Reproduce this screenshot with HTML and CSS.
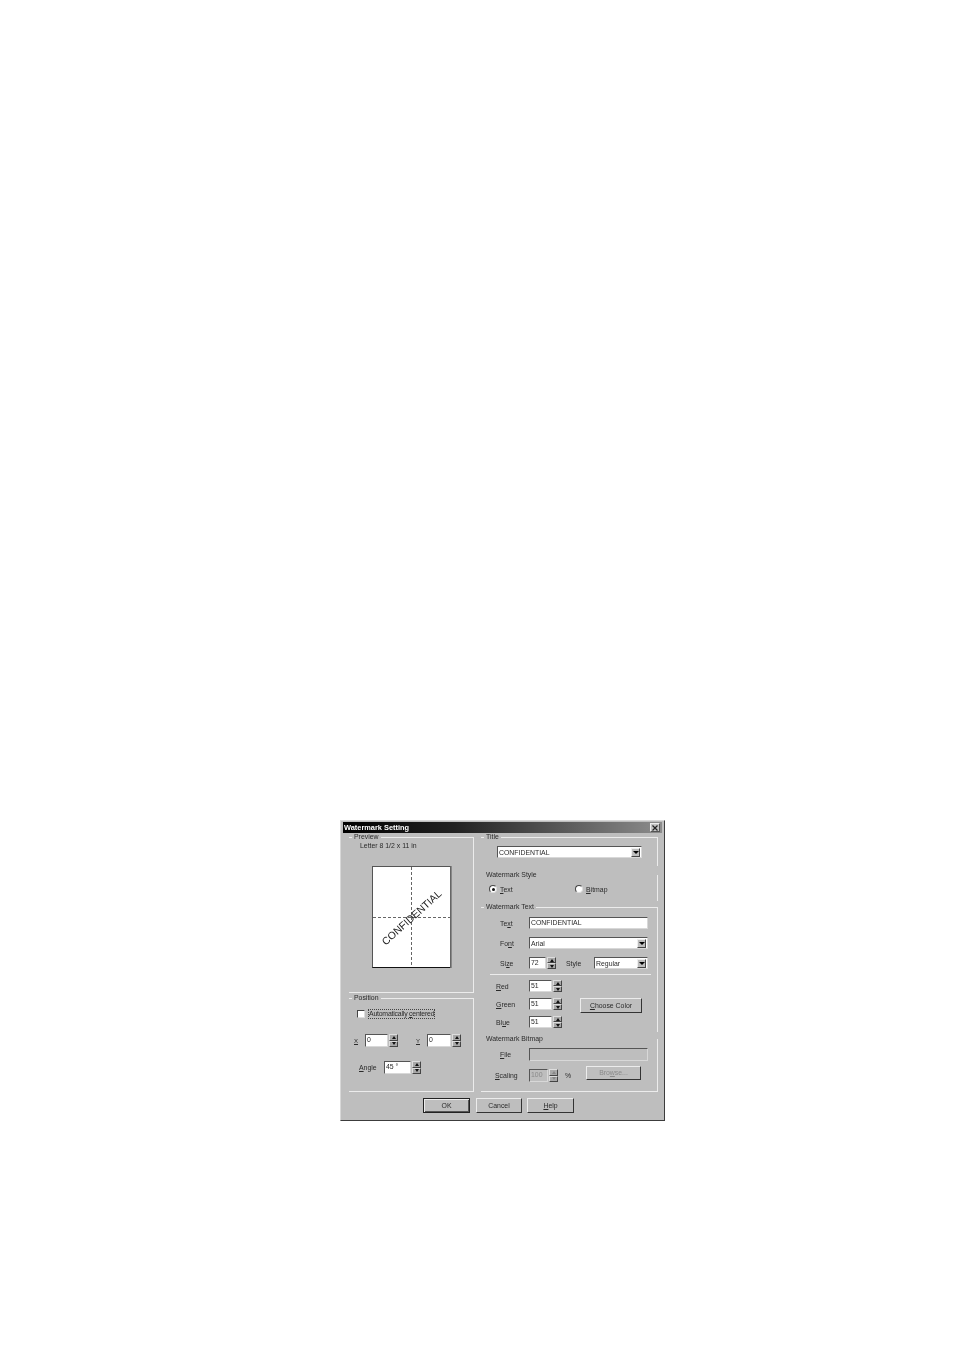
FILE: index.html
```html
<!DOCTYPE html>
<html lang="en">
<head>
    <meta charset="UTF-8">
    <title>Watermark Setting</title>
    <link rel="stylesheet" href="styles.css">
</head>
<body>
<div class="dialog">
    <div class="titleBar">
        <span>Watermark Setting</span>
        <div class="closeBtn">
            <svg width="6" height="6" viewBox="0 0 6 6"><path d="M0.5 0.5L5.5 5.5M5.5 0.5L0.5 5.5" stroke="#222" stroke-width="1.2"/></svg>
        </div>
    </div>
    <div class="columns">
        <div class="leftCol">
            <fieldset class="group previewGroup">
                <legend>Preview</legend>
                <div class="paperName">Letter 8 1/2 x 11 in</div>
                <div class="paper">
                    <div class="dashV"></div>
                    <div class="dashH"></div>
                    <div class="stamp">CONFIDENTIAL</div>
                </div>
            </fieldset>
            <fieldset class="group positionGroup">
                <legend>Position</legend>
                <div class="checkRow">
                    <div class="checkBox"></div>
                    <span class="focusLabel">Automatically <u>c</u>entered</span>
                </div>
                <div class="xyRow">
                    <span class="xyLabel"><u>X</u></span>
                    <div class="field w23">0</div>
                    <div class="spin"><i></i><b></b></div>
                    <span class="xyLabel second"><u>Y</u></span>
                    <div class="field w24">0</div>
                    <div class="spin"><i></i><b></b></div>
                </div>
                <div class="angleRow">
                    <span class="angleLabel"><u>A</u>ngle</span>
                    <div class="field w27">45 °</div>
                    <div class="spin"><i></i><b></b></div>
                </div>
            </fieldset>
        </div>
        <div class="rightCol">
            <fieldset class="group titleGroup">
                <legend>Title</legend>
                <div class="combo titleCombo"><span>CONFIDENTIAL</span><div class="arrow"></div></div>
            </fieldset>
            <fieldset class="group styleGroup">
                <legend>Watermark Style</legend>
                <div class="radioRow">
                    <div class="radioItem first"><div class="radio on"></div><span><u>T</u>ext</span></div>
                    <div class="radioItem"><div class="radio"></div><span><u>B</u>itmap</span></div>
                </div>
            </fieldset>
            <fieldset class="group textGroup">
                <legend>Watermark Text</legend>
                <div class="row textRow">
                    <span class="lbl">Te<u>x</u>t</span>
                    <div class="field w119">CONFIDENTIAL</div>
                </div>
                <div class="row fontRow">
                    <span class="lbl">Fo<u>n</u>t</span>
                    <div class="combo w119"><span>Arial</span><div class="arrow"></div></div>
                </div>
                <div class="row sizeRow">
                    <span class="lbl">Si<u>z</u>e</span>
                    <div class="field w17">72</div>
                    <div class="spin"><i></i><b></b></div>
                    <span class="styleLabel">Style</span>
                    <div class="combo w54"><span>Regular</span><div class="arrow"></div></div>
                </div>
                <div class="divider"></div>
                <div class="colors">
                    <div class="colorRows">
                        <div class="row colorRow">
                            <span class="lbl colorLbl"><u>R</u>ed</span>
                            <div class="field w23">51</div>
                            <div class="spin"><i></i><b></b></div>
                        </div>
                        <div class="row colorRow">
                            <span class="lbl colorLbl"><u>G</u>reen</span>
                            <div class="field w23">51</div>
                            <div class="spin"><i></i><b></b></div>
                        </div>
                        <div class="row colorRow">
                            <span class="lbl colorLbl">Bl<u>u</u>e</span>
                            <div class="field w23">51</div>
                            <div class="spin"><i></i><b></b></div>
                        </div>
                    </div>
                    <div class="btn chooseBtn"><span><u>C</u>hoose Color</span></div>
                </div>
            </fieldset>
            <fieldset class="group bitmapGroup">
                <legend>Watermark Bitmap</legend>
                <div class="row fileRow">
                    <span class="lbl"><u>F</u>ile</span>
                    <div class="field w119 disabled"></div>
                </div>
                <div class="row scaleRow">
                    <span class="lbl scaleLbl"><u>S</u>caling</span>
                    <div class="field w19 disabled">100</div>
                    <div class="spin disabledSpin"><i></i><b></b></div>
                    <span class="percent">%</span>
                    <div class="btn browseBtn"><span>Bro<u>w</u>se...</span></div>
                </div>
            </fieldset>
        </div>
    </div>
    <div class="footer">
        <div class="btn footBtn defaultBtn"><span>OK</span></div>
        <div class="btn footBtn cancelBtn"><span>Cancel</span></div>
        <div class="btn footBtn"><span><u>H</u>elp</span></div>
    </div>
</div>
</body>
</html>
```
FILE: styles.css
```css
*{
    margin: 0px;
    padding: 0px;
    box-sizing: border-box;
}
body{
    width: 954px;
    height: 1351px;
    padding: 820px 0px 0px 340px;
    background-color: #fff;
    font-family: "Liberation Sans", Arial, sans-serif;
    font-size: 6.9px;
    color: #2a2a2a;
    overflow: hidden;
}
u{
    text-underline-offset: 1px;
}
.dialog{
    width: 325px;
    height: 301px;
    padding: 1px 2px 2px;
    background-color: #bebebe;
    border-top: 1px solid #d8d8d8;
    border-left: 1px solid #d8d8d8;
    border-right: 1px solid #3c3c3c;
    border-bottom: 1px solid #3c3c3c;
    filter: blur(0.5px);
}
.titleBar{
    display: flex;
    align-items: center;
    justify-content: space-between;
    height: 11px;
    padding: 0px 2px 0px 1px;
    background: linear-gradient(90deg, #000 0%, #222 35%, #8c8c8c 100%);
    color: #fff;
    font-size: 7.4px;
    font-weight: bold;
    white-space: nowrap;
}
.closeBtn{
    display: flex;
    align-items: center;
    justify-content: center;
    width: 10px;
    height: 9px;
    background-color: #c4c4c4;
    border: 1px solid;
    border-color: #eee #555 #555 #eee;
}
.columns{
    display: flex;
    gap: 7px;
    padding-left: 6px;
}
.leftCol{
    width: 125px;
}
.rightCol{
    width: 177px;
}
.group{
    display: block;
    min-width: 0px;
    border: 0px;
    border-top: 1px solid #ececec;
    border-right: 1px solid #ececec;
}
.group legend{
    height: 8px;
    margin-left: 3px;
    padding: 0px 2px;
    line-height: 8px;
    white-space: nowrap;
}
.previewGroup{
    height: 160px;
    border-bottom: 1px solid #ececec;
}
.paperName{
    padding: 1px 0px 0px 11px;
    line-height: 8px;
}
.paper{
    position: relative;
    width: 78px;
    height: 102px;
    margin: 16px 0px 0px 23px;
    background-color: #fff;
    border-top: 1px solid #555;
    border-left: 1px solid #555;
    border-bottom: 1px solid #111;
    box-shadow: 1px 0px 0px #666, 2px 0px 0px #888;
}
.dashV{
    position: absolute;
    left: 38px;
    top: 0px;
    width: 1px;
    height: 100%;
    background: repeating-linear-gradient(180deg, #666 0px, #666 3px, transparent 3px, transparent 5px);
}
.dashH{
    position: absolute;
    left: 0px;
    top: 50px;
    width: 100%;
    height: 1px;
    background: repeating-linear-gradient(90deg, #666 0px, #666 3px, transparent 3px, transparent 5px);
}
.stamp{
    position: absolute;
    left: -3px;
    top: 44px;
    width: 84px;
    text-align: center;
    font-size: 10.4px;
    line-height: 14px;
    white-space: nowrap;
    color: #222;
    transform: rotate(-42deg);
}
.positionGroup{
    height: 98px;
    margin-top: 1px;
    border-bottom: 1px solid #ececec;
}
.checkRow{
    display: flex;
    align-items: center;
    gap: 3px;
    height: 10px;
    margin: 7px 0px 0px 8px;
}
.checkBox{
    width: 8px;
    height: 8px;
    background-color: #fff;
    border: 1px solid;
    border-color: #444 #ddd #ddd #444;
}
.focusLabel{
    padding: 0px;
    line-height: 8px;
    letter-spacing: -0.2px;
    border: 1px dotted #444;
    white-space: nowrap;
}
.xyRow{
    display: flex;
    align-items: center;
    height: 13px;
    margin: 15px 0px 0px 5px;
}
.xyLabel{
    width: 11px;
    font-size: 6px;
}
.xyLabel.second{
    width: 11px;
    margin-left: 18px;
}
.angleRow{
    display: flex;
    align-items: center;
    height: 13px;
    margin: 14px 0px 0px 10px;
}
.angleLabel{
    width: 25px;
}
.field{
    height: 100%;
    padding-left: 1px;
    background-color: #fff;
    border: 1px solid;
    border-color: #555 #d8d8d8 #d8d8d8 #555;
    line-height: 10px;
    white-space: nowrap;
    overflow: hidden;
}
.field.disabled{
    background-color: #bebebe;
    color: #8a8a8a;
}
.w17{ width: 17px; }
.w19{ width: 19px; }
.w23{ width: 23px; }
.w24{ width: 24px; }
.w27{ width: 27px; }
.w54{ width: 54px; }
.w119{ width: 119px; }
.spin{
    display: flex;
    flex-direction: column;
    width: 9px;
    height: 100%;
    margin-left: 1px;
}
.spin i, .spin b{
    display: flex;
    flex: 1;
    align-items: center;
    justify-content: center;
    background-color: #a8a8a8;
    border: 1px solid;
    border-color: #ddd #444 #444 #ddd;
}
.spin i::after{
    content: "";
    border-left: 2.5px solid transparent;
    border-right: 2.5px solid transparent;
    border-bottom: 3px solid #111;
}
.spin b::after{
    content: "";
    border-left: 2.5px solid transparent;
    border-right: 2.5px solid transparent;
    border-top: 3px solid #111;
}
.disabledSpin i::after{
    border-bottom-color: #888;
}
.disabledSpin b::after{
    border-top-color: #888;
}
.combo{
    display: flex;
    align-items: center;
    justify-content: space-between;
    height: 100%;
    padding: 0px 1px;
    background-color: #fff;
    border: 1px solid;
    border-color: #555 #d8d8d8 #d8d8d8 #555;
}
.arrow{
    display: flex;
    align-items: center;
    justify-content: center;
    width: 9px;
    height: 9px;
    background-color: #bebebe;
    border: 1px solid;
    border-color: #eee #444 #444 #eee;
}
.arrow::after{
    content: "";
    border-left: 3px solid transparent;
    border-right: 3px solid transparent;
    border-top: 3px solid #000;
}
.titleCombo{
    width: 145px;
    height: 12px;
    margin: 5px 0px 0px 16px;
}
.titleGroup{
    height: 33px;
}
.styleGroup{
    height: 30px;
    margin-top: 5px;
    border-top: 0px;
}
.radioRow{
    display: flex;
    align-items: center;
    height: 10px;
    margin: 5px 0px 0px 8px;
}
.radioItem{
    display: flex;
    align-items: center;
    gap: 3px;
}
.radioItem.first{
    width: 86px;
}
.radio{
    display: flex;
    align-items: center;
    justify-content: center;
    width: 8px;
    height: 8px;
    background-color: #fff;
    border: 1px solid;
    border-color: #444 #ddd #ddd #444;
    border-radius: 50%;
}
.radio.on::after{
    content: "";
    width: 3px;
    height: 3px;
    background-color: #111;
    border-radius: 50%;
}
.textGroup{
    height: 129px;
    margin-top: 2px;
}
.row{
    display: flex;
    align-items: center;
    height: 12px;
}
.lbl{
    width: 48px;
    padding-left: 19px;
    white-space: nowrap;
}
.textRow{
    margin-top: 6px;
}
.fontRow{
    margin-top: 8px;
}
.sizeRow{
    margin-top: 8px;
}
.styleLabel{
    width: 38px;
    padding-left: 10px;
}
.divider{
    height: 1px;
    margin: 5px 6px 0px 9px;
    background-color: #ececec;
}
.colors{
    display: flex;
    align-items: center;
}
.colorRows{
    display: flex;
    flex-direction: column;
    gap: 6px;
    margin-top: 5px;
}
.colorLbl{
    padding-left: 15px;
}
.btn{
    display: flex;
    align-items: center;
    justify-content: center;
    height: 15px;
    background-color: #bebebe;
    border: 1px solid;
    border-color: #ececec #333 #333 #ececec;
    white-space: nowrap;
}
.chooseBtn{
    width: 62px;
    margin-left: 18px;
    margin-top: 8px;
}
.bitmapGroup{
    height: 57px;
    margin-top: 3px;
    border-top: 0px;
    border-bottom: 1px solid #ececec;
}
.fileRow{
    height: 13px;
    margin-top: 5px;
}
.scaleRow{
    height: 13px;
    margin-top: 8px;
}
.scaleLbl{
    padding-left: 14px;
}
.percent{
    width: 28px;
    padding-left: 7px;
}
.browseBtn{
    width: 55px;
    height: 14px;
    margin-top: -6px;
    color: #8a8a8a;
}
.footer{
    display: flex;
    gap: 5px;
    margin-top: 6px;
    padding-left: 80px;
}
.footBtn{
    width: 47px;
}
.cancelBtn{
    width: 46px;
}
.defaultBtn{
    margin-right: 1px;
    border-color: #222;
    box-shadow: inset 1px 1px 0px #ececec, inset -1px -1px 0px #555;
}
```
